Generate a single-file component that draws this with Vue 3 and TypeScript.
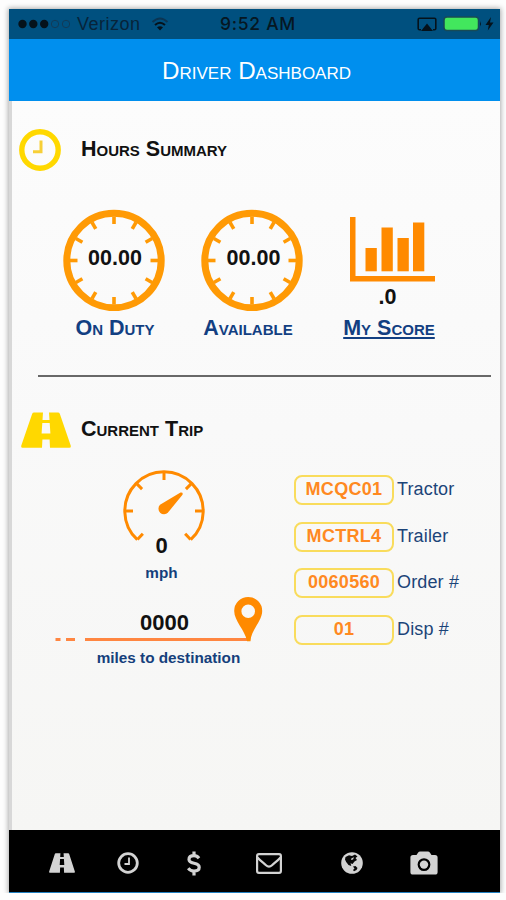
<script setup lang="ts">
interface Gauge { value: string; label: string }
interface Field { value: string; label: string }

const gauges: Gauge[] = [
  { value: '00.00', label: 'On Duty' },
  { value: '00.00', label: 'Available' },
]
const fields: Field[] = [
  { value: 'MCQC01', label: 'Tractor' },
  { value: 'MCTRL4', label: 'Trailer' },
  { value: '0060560', label: 'Order #' },
  { value: '01', label: 'Disp #' },
]
const hours: number[] = Array.from({ length: 12 }, (_, i) => i * 30)
const speedTicks: number[] = [-137, -90, -45, 0, 45, 90, 137]
const bars = [
  { x: 15.5, y: 31 },
  { x: 31.5, y: 10.5 },
  { x: 47.5, y: 21 },
  { x: 63, y: 5.5 },
]
</script>

<template>
  <main class="phone">
    <div class="status">
      <div class="carrier">
        <svg class="signal" width="52" height="10" viewBox="0 0 52 10">
          <circle cx="4.5" cy="5" r="4.2" /><circle cx="15.3" cy="5" r="4.2" /><circle cx="26.2" cy="5" r="4.2" />
          <circle class="empty" cx="37" cy="5" r="3.7" /><circle class="empty" cx="48" cy="5" r="3.7" />
        </svg>
        <span class="network">Verizon</span>
        <svg class="wifi" width="18" height="14" viewBox="0 0 18 14">
          <path class="faint" d="M1.5 5Q9-2 16.5 5" /><path d="M4 8Q9 3.5 14 8" /><path class="fan" d="M6 10.3Q9 8 12 10.3L9 13.5Z" />
        </svg>
      </div>
      <span class="time">9:52 AM</span>
      <div class="power">
        <svg width="20" height="15" viewBox="0 0 20 15">
          <path class="screen" d="M4 12.8H2.5Q1.2 12.8 1.2 11.5V2.5Q1.2 1.2 2.5 1.2H17.5Q18.8 1.2 18.8 2.5V11.5Q18.8 12.8 17.5 12.8H16" />
          <path d="M10 6.5L16 14H4Z" />
        </svg>
        <svg width="39" height="16" viewBox="0 0 39 16">
          <rect class="cell" x="1" y="1" width="34.5" height="13.5" rx="3" />
          <path d="M37 5Q38.8 7.8 37 10.5Z" />
        </svg>
        <svg width="9" height="14" viewBox="0 0 9 14"><path d="M6 0L.5 8H3.8L2.8 13.5L8.5 5.4H5Z" /></svg>
      </div>
    </div>

    <header class="title"><h1>Driver Dashboard</h1></header>

    <div class="content">
      <section class="hours">
        <div class="heading">
          <svg class="clock" width="42" height="42" viewBox="0 0 42 42">
            <circle cx="21" cy="21" r="18.2" /><path d="M22 11.5V22.8H14" />
          </svg>
          <h2>Hours Summary</h2>
        </div>
        <div class="stats">
          <div v-for="g in gauges" :key="g.label" class="stat">
            <div class="dial">
              <svg width="102" height="102" viewBox="-51 -51.5 102 102">
                <circle r="47.2" />
                <path v-for="a in hours" :key="a" d="M0-44V-36.5" :transform="`rotate(${a})`" />
              </svg>
              <span class="reading">{{ g.value }}</span>
            </div>
            <span class="label">{{ g.label }}</span>
          </div>
          <div class="stat score">
            <svg class="chart" width="85" height="65" viewBox="0 0 85 65">
              <path d="M0 0H5.5V59H85V64.5H0Z" />
              <rect v-for="b in bars" :key="b.x" :x="b.x" :y="b.y" width="11.3" :height="54.3 - b.y" />
            </svg>
            <span class="points">.0</span>
            <a class="label link">My Score</a>
          </div>
        </div>
      </section>

      <section class="trip">
        <div class="heading">
          <svg class="road" width="50" height="36" viewBox="0 0 50 36">
            <path fill-rule="evenodd" d="M13 .5H22L21.5 8H28.5L28 .5H37Q38.3.5 38.8 1.8L49.7 33.5Q50.2 35.7 48.5 35.7H29L28.6 27.5H21.4L21 35.7H1.5Q-.2 35.7.3 33.5L11.2 1.8Q11.7.5 13 .5ZM21.3 11L20.6 21.5H29.4L28.7 11Z" />
          </svg>
          <h2>Current Trip</h2>
        </div>
        <div class="details">
          <div class="progress">
            <div class="speed">
              <svg width="84" height="76" viewBox="-42 -42 84 76">
                <path class="arc" d="M-26.7 28.7A39.2 39.2 0 1 1 26.7 28.7" />
                <path v-for="a in speedTicks" :key="a" class="arc" d="M0-39V-31" :transform="`rotate(${a})`" />
                <path d="M-4-6.2L16.5-18.5Q19.4-19 18.5-16.2L4 1.5A5.5 5.5 0 1 1-4-6.2Z" />
              </svg>
              <span class="mph">0</span>
            </div>
            <span class="caption unit">mph</span>
            <div class="route">
              <svg width="208" height="46" viewBox="0 0 208 46">
                <path class="line" d="M.5 43.5H5.5M11 43.5H20M30 43.5H195" />
                <path fill-rule="evenodd" d="M192 45.2C190 34 179.2 25 179.2 15A14 14 0 0 1 207.2 15C207.2 25 196 34 195.5 45.2ZM193.2 8.5A6.8 6.8 0 1 0 193.2 22.1A6.8 6.8 0 1 0 193.2 8.5Z" />
              </svg>
              <span class="miles">0000</span>
            </div>
            <span class="caption">miles to destination</span>
          </div>
          <div class="fields">
            <div v-for="f in fields" :key="f.label" class="field">
              <span class="pill">{{ f.value }}</span><span class="name">{{ f.label }}</span>
            </div>
          </div>
        </div>
      </section>
    </div>

    <nav class="tabs">
      <svg width="26" height="20" viewBox="0 0 50 36" preserveAspectRatio="none">
        <path fill-rule="evenodd" d="M13 .5H22L21.5 7H28.5L28 .5H37Q38.3.5 38.8 1.8L49.7 33.5Q50.2 35.7 48.5 35.7H29L28.6 26H21.4L21 35.7H1.5Q-.2 35.7.3 33.5L11.2 1.8Q11.7.5 13 .5ZM21.3 11L20.6 21.5H29.4L28.7 11Z" />
      </svg>
      <svg class="stroke" width="22" height="22" viewBox="0 0 22 22"><circle cx="11" cy="11" r="9.3" /><path class="thin" d="M12 5.5V12H7.5" /></svg>
      <svg class="stroke dollar" width="14" height="25" viewBox="0 0 14 25"><path d="M12 7.2Q10 4.7 7 4.7C3.6 4.7 2 6.5 2 8.5C2 14 12.2 10.5 12.2 16.2C12.2 18.5 10.5 20 7 20Q3.5 20 1.2 17.2M7 .5V5M7 20V24.5" /></svg>
      <svg class="stroke mail" width="26" height="21" viewBox="0 0 26 21"><rect x="1.1" y="1.1" width="23.8" height="18.8" rx="1.8" /><path d="M1.5 4.5C4 7.5 7 9.5 10 12.2Q13 15 16 12.2C19 9.5 22 7.5 24.5 4.5" /></svg>
      <svg width="22" height="22" viewBox="0 0 22 22">
        <circle cx="11" cy="11" r="10.8" />
        <path class="land" d="M4.5 5L8 3.2L11 4L14 2.6L16.5 4.5L14.5 6L16 8L13.5 9.5L11.5 12L9.5 11.2L10.3 14L7.5 13L5.2 10L4 7.5ZM12 14.5L14.5 14L16.5 16L15.5 18L13 19.3L12 18L13.5 16.5Z" />
        <path d="M10.5 6.2L13 5.2L12 7.5L10 8Z" />
      </svg>
      <svg width="28" height="24" viewBox="0 0 28 24">
        <path fill-rule="evenodd" d="M3 4H6.5L8 1.7Q8.8.4 10.2.4H17.8Q19.2.4 20 1.7L21.5 4H25Q27.6 4 27.6 6.6V21Q27.6 23.6 25 23.6H3Q.4 23.6.4 21V6.6Q.4 4 3 4ZM14 7.2A6.4 6.4 0 1 0 14 20A6.4 6.4 0 1 0 14 7.2Z" />
        <circle cx="14" cy="13.6" r="4.2" />
      </svg>
    </nav>
  </main>
</template>

<style>
body { margin: 0; background: #fdfdfd; }
</style>

<style scoped>
.phone {
  box-sizing: border-box;
  width: 491px;
  height: 884px;
  margin: 9px 0 0 9px;
  display: flex;
  flex-direction: column;
  font-family: "Liberation Sans", Arial, sans-serif;
  border-bottom: 1px solid #207fc0;
  box-shadow: 0 0 5px 1px rgba(0, 0, 0, 0.32);
}
svg { display: block; flex: none; }
h1, h2 { margin: 0; font-variant: small-caps; white-space: nowrap; }
.status {
  height: 30px;
  background: #00507f;
  display: grid;
  grid-template-columns: 1fr auto 1fr;
  align-items: center;
  color: #061722;
}
.status svg { fill: #05121b; }
.carrier { display: flex; align-items: center; padding-left: 9px; }
.signal .empty { fill: none; stroke: #123b58; stroke-width: 1; }
.network { margin-left: 7px; font-size: 18px; line-height: 30px; letter-spacing: 0.5px; color: #07243a; }
.wifi { margin-left: 10px; }
.wifi path { fill: none; stroke: #05121b; stroke-width: 2; }
.wifi .faint { stroke: #0b3553; }
.wifi .fan { fill: #05121b; stroke: none; }
.time { font-family: Inter, sans-serif; font-weight: 500; font-size: 17.5px; line-height: 30px; letter-spacing: 0.7px; padding-left: 7px; }
.power { display: flex; align-items: center; justify-content: flex-end; padding-right: 6px; }
.power svg:nth-child(1) { margin-right: -2px; }
.power svg:nth-child(2) { margin-left: 8px; }
.power svg:nth-child(3) { margin-left: 3px; }
.power .screen { fill: none; stroke: #05121b; stroke-width: 1.6; }
.power .cell { fill: #42e75d; stroke: #174b57; stroke-width: 1.5; }
.title {
  height: 62px;
  background: #008fee;
  display: flex;
  align-items: center;
  justify-content: center;
  color: #fff;
}
.title h1 { font-size: 24.2px; font-weight: 400; line-height: 30px; padding: 1px 0 0 4px; }
.content {
  flex: 1;
  box-sizing: border-box;
  border-left: 3px solid #d8d8d8;
  background: linear-gradient(#fcfcfc, #f9f9f9 45%, #f6f6f4);
  padding: 28px 9px 0 7px;
}
.heading { display: flex; align-items: center; height: 42px; }
h2 { font-size: 21.5px; line-height: 24px; color: #111; }
.hours { border-bottom: 2px solid #686868; border-image: linear-gradient(90deg, transparent 20px, #686868 20px) 1; height: 246px; }
.hours h2 { margin-left: 20px; padding-bottom: 3px; }
.clock { fill: none; stroke: #ffd800; stroke-width: 5.4; }
.clock path { stroke: #f7cf37; stroke-width: 3; }
.stats { display: grid; grid-template-columns: 139px 138px 136px; padding: 38px 0 0 25px; }
.stat { display: flex; flex-direction: column; align-items: center; }
.dial { display: grid; place-items: center; }
.dial > * { grid-area: 1 / 1; }
.dial svg { fill: none; stroke: #ff9a05; stroke-width: 7; }
.dial path { stroke-width: 3.6; }
.reading { font-size: 21.5px; font-weight: 700; line-height: 24px; color: #111; padding: 0 0 5px 3px; }
.label { font-size: 21.5px; font-weight: 700; font-variant: small-caps; line-height: 24px; color: #123f82; white-space: nowrap; margin-top: 5px; padding-left: 3px; }
.stat:nth-child(2) .label { padding: 0 8px 0 0; }
.score { padding-top: 8px; }
.chart { fill: #ff8a00; margin-left: 7px; }
.points { font-size: 21.5px; font-weight: 700; line-height: 24px; color: #111; margin: 3px 3px 0 0; }
.stat .link { text-decoration: underline; text-decoration-thickness: 2px; text-underline-offset: 2px; margin-top: 7px; padding: 0; }
.trip { padding: 32px 0 0 2px; }
.trip h2 { margin-left: 10px; padding-bottom: 3px; }
.road { fill: #ffd800; margin-top: 0; }
.details { display: grid; grid-template-columns: 239px 1fr; padding-top: 18px; }
.progress { display: flex; flex-direction: column; align-items: center; padding-left: 37px; }
.speed { display: flex; flex-direction: column; align-items: center; fill: #ff8a00; margin-left: 10px; }
.speed .arc { fill: none; stroke: #ff8a00; stroke-width: 3; }
.mph { font-size: 22px; font-weight: 700; line-height: 24px; color: #111; margin: -11px 5px 0 0; }
.caption { font-size: 15.3px; font-weight: 700; line-height: 18px; color: #153f7c; white-space: nowrap; margin: 7px 0 0 19px; }
.unit { margin: 6px 0 0 5px; }
.route { display: grid; place-items: end center; margin-top: 14px; }
.route > * { grid-area: 1 / 1; }
.route svg { fill: #ff8a00; }
.line { stroke: #ff8641; stroke-width: 3; }
.miles { font-size: 22px; font-weight: 700; line-height: 24px; color: #111; padding: 0 0 7px 11px; }
.fields { display: flex; flex-direction: column; gap: 16.6px; padding: 6px 0 0 34px; }
.field { display: flex; align-items: center; height: 30px; }
.pill {
  box-sizing: border-box;
  width: 100px;
  height: 30px;
  border: 2px solid #f9dc5c;
  border-radius: 8px;
  text-align: center;
  font-size: 18px;
  font-weight: 700;
  line-height: 25px;
  letter-spacing: 0.3px;
  color: #ff8921;
}
.name { font-size: 18px; line-height: 26px; letter-spacing: 0.15px; color: #1c4478; margin-left: 3px; padding-bottom: 2px; white-space: nowrap; }
.tabs {
  height: 62px;
  background: #000;
  display: flex;
  align-items: center;
  box-sizing: border-box;
  padding: 4px 0 0 40px;
  fill: #d3d3d3;
}
.tabs svg:nth-child(2) { margin-left: 42px; }
.tabs svg:nth-child(3) { margin-left: 48px; }
.tabs svg:nth-child(4) { margin-left: 55px; }
.tabs svg:nth-child(5) { margin-left: 59px; }
.tabs svg:nth-child(6) { margin-left: 47px; }
.tabs .stroke { fill: none; stroke: #d3d3d3; stroke-width: 2.8; }
.tabs .dollar { stroke-width: 3.2; }
.tabs .thin { stroke-width: 1.8; }
.tabs .mail { stroke-width: 2.2; }
.land { fill: #080808; }
</style>
